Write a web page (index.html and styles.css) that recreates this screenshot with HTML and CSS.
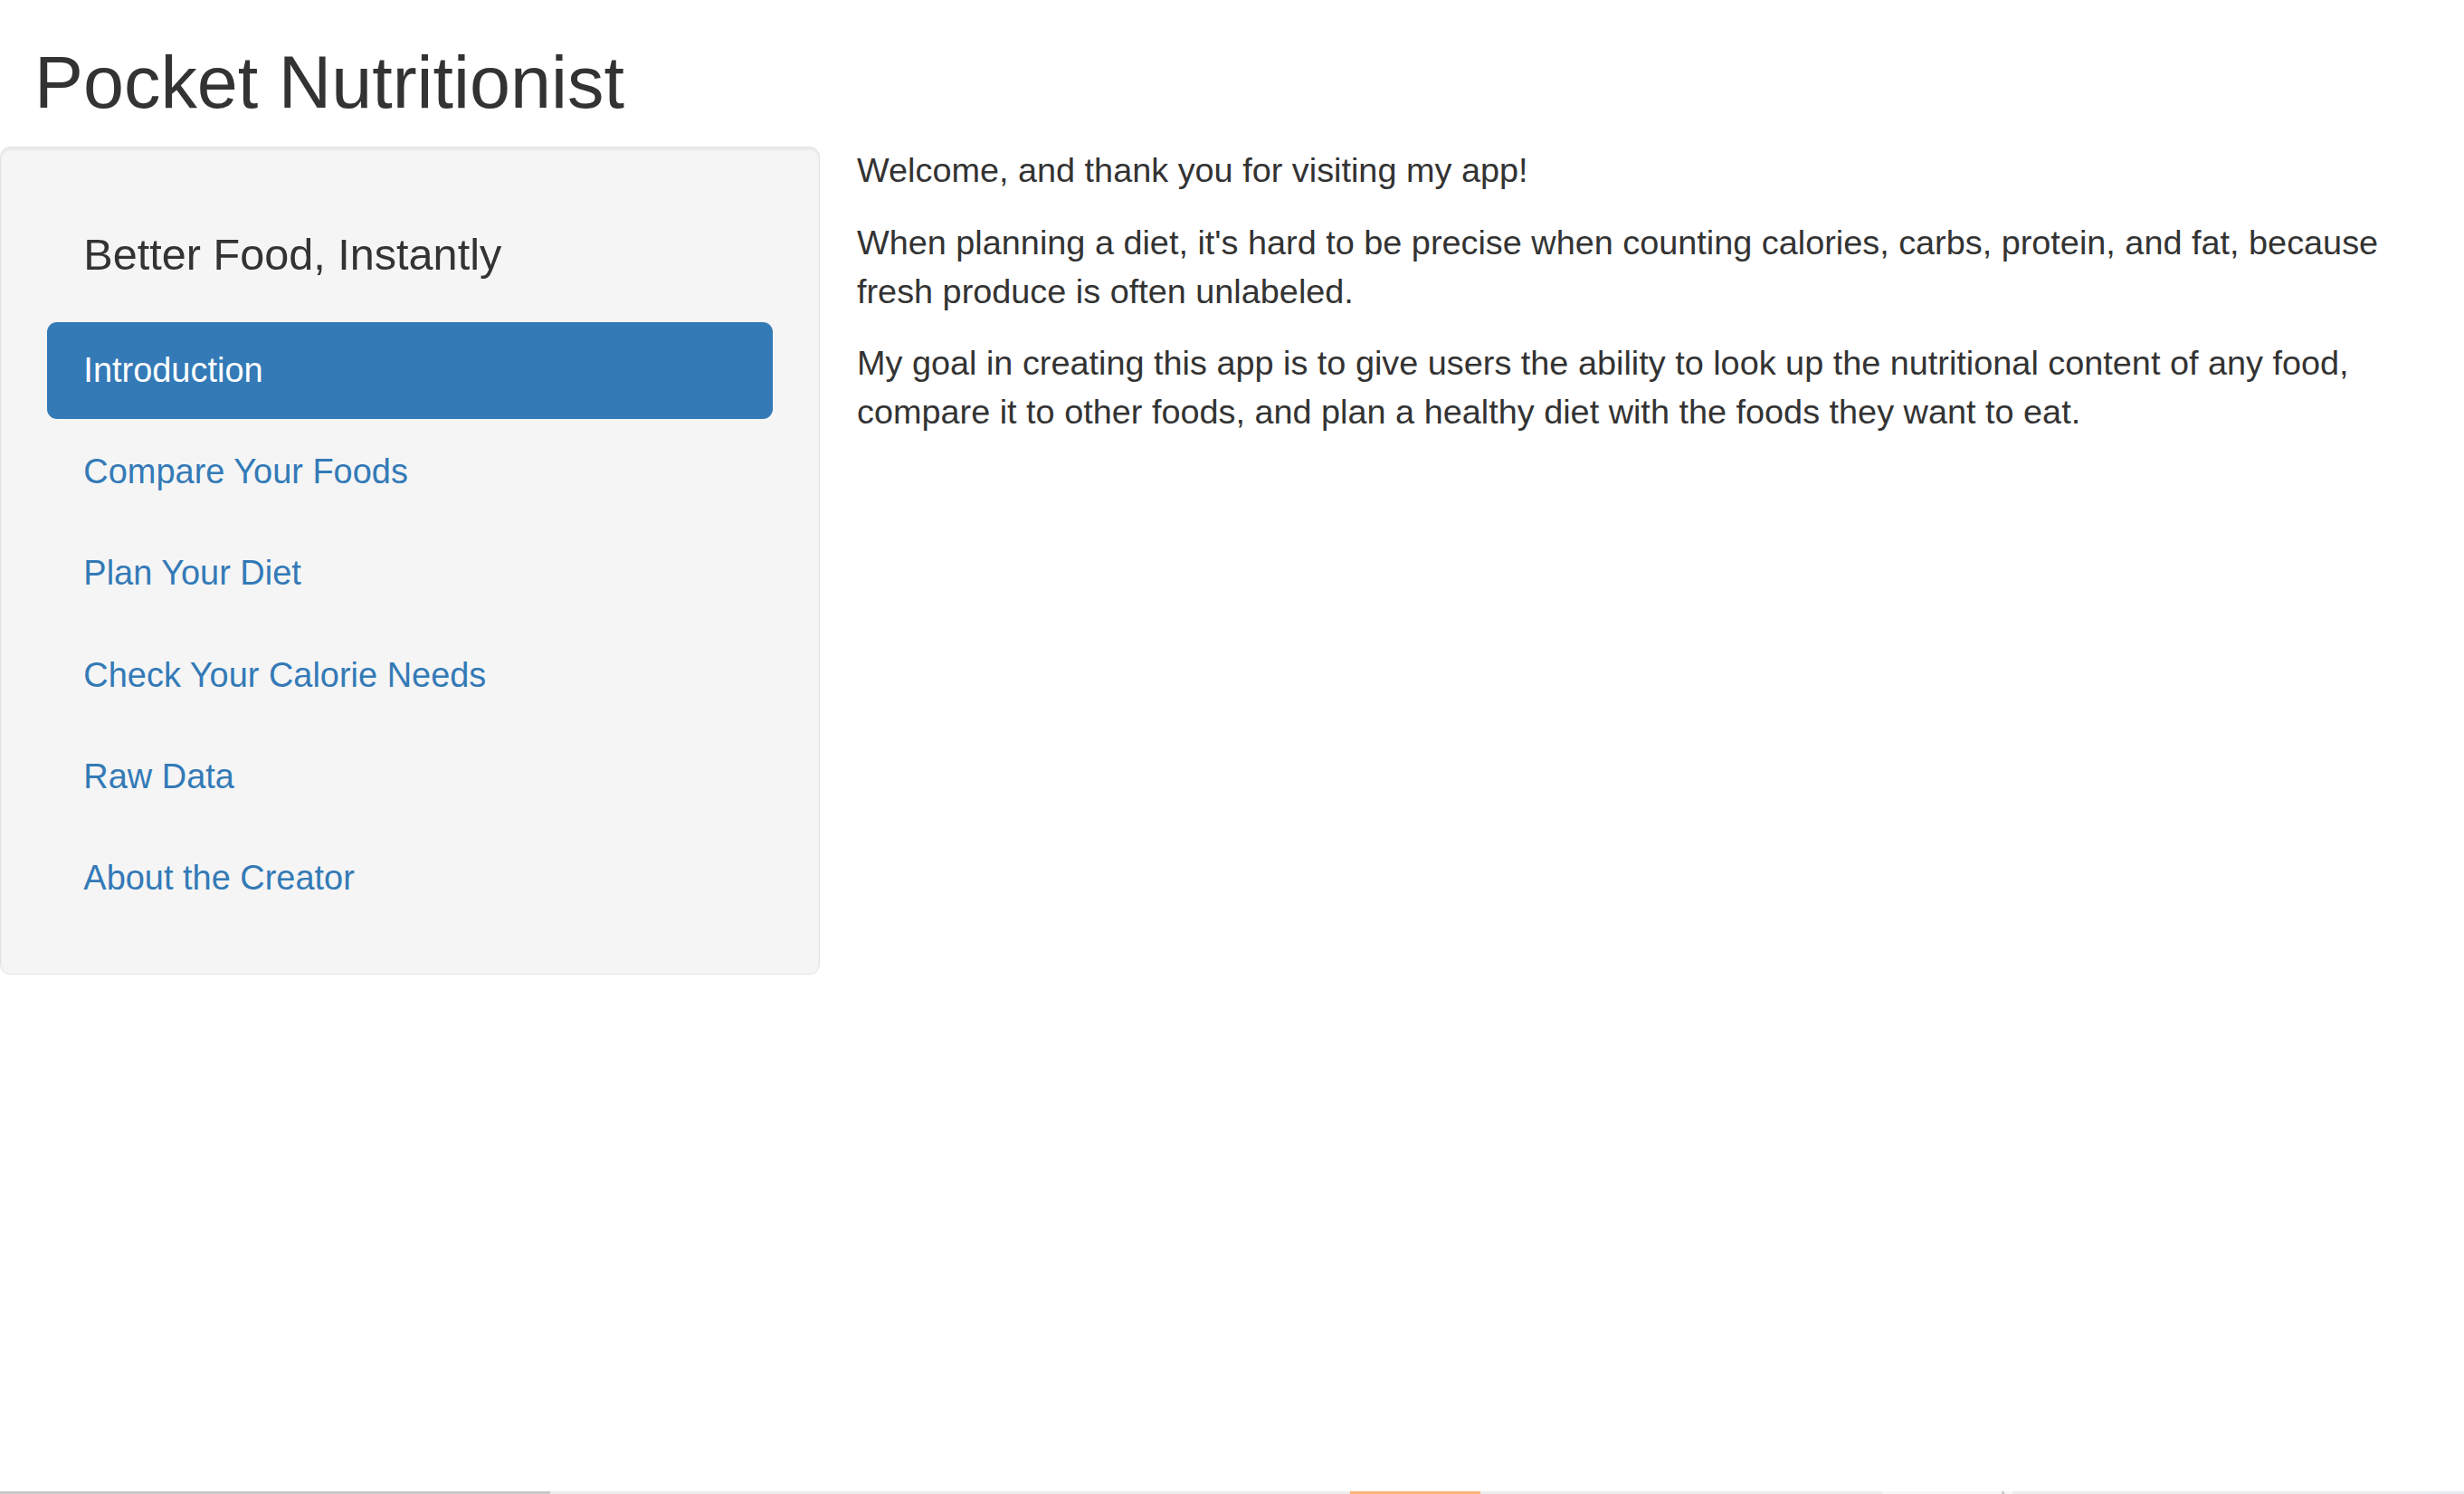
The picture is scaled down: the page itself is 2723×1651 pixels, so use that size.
FILE: index.html
```html
<!DOCTYPE html>
<html lang="en">
<head>
<meta charset="utf-8">
<title>Pocket Nutritionist</title>
<link rel="stylesheet" href="styles.css">
</head>
<body>
<div class="page">
  <h2 class="title">Pocket Nutritionist</h2>
  <div class="row">
    <div class="well">
      <ul class="nav">
        <li class="brand">Better Food, Instantly</li>
        <li class="item active"><a href="#">Introduction</a></li>
        <li class="item"><a href="#">Compare Your Foods</a></li>
        <li class="item"><a href="#">Plan Your Diet</a></li>
        <li class="item"><a href="#">Check Your Calorie Needs</a></li>
        <li class="item"><a href="#">Raw Data</a></li>
        <li class="item"><a href="#">About the Creator</a></li>
      </ul>
    </div>
    <div class="content">
      <p>Welcome, and thank you for visiting my app!</p>
      <p>When planning a diet, it's hard to be precise when counting calories, carbs, protein, and fat, because fresh produce is often unlabeled.</p>
      <p>My goal in creating this app is to give users the ability to look up the nutritional content of any food, compare it to other foods, and plan a healthy diet with the foods they want to eat.</p>
    </div>
  </div>
  <div class="strip">
    <span class="seg s1"></span>
    <span class="seg s2"></span>
    <span class="seg s3"></span>
    <span class="seg s4"></span>
    <span class="seg s5"></span>
    <span class="seg s6"></span>
    <span class="seg s7"></span>
    <span class="seg s8"></span>
  </div>
</div>
</body>
</html>
```

FILE: styles.css
```css
html, body {
  margin: 0;
  padding: 0;
  background: #ffffff;
}

body {
  font-family: "Liberation Sans", Arial, Helvetica, sans-serif;
  color: #333333;
  font-size: 37.85px;
  line-height: 53.8px;
}

.page {
  min-height: 100vh;
  display: flex;
  flex-direction: column;
}

.title {
  margin: 46.6px 0 26.6px 0;
  padding-left: 38px;
  font-size: 80.9px;
  font-weight: 500;
  line-height: 88.8px;
  color: #333333;
}

.row {
  display: flex;
  align-items: flex-start;
}

.well {
  box-sizing: border-box;
  width: 906px;
  flex: none;
  background: #f5f5f5;
  border: 1px solid #e3e3e3;
  border-radius: 11px;
  padding: 51px;
  box-shadow: inset 0 3px 3px rgba(0, 0, 0, 0.05);
}

.nav {
  list-style: none;
  margin: 0;
  padding: 0;
}

.brand {
  box-sizing: border-box;
  height: 136.6px;
  padding: 41px 40.35px 0 40.35px;
  font-size: 48.6px;
  line-height: 53.8px;
  color: #333333;
}

.item {
  margin-top: 5.4px;
}

.item a {
  display: block;
  padding: 26.7px 40.35px;
  line-height: 53.6px;
  font-size: 37.95px;
  color: #337ab7;
  text-decoration: none;
  border-radius: 11px;
}

.item.active a {
  background: #337ab7;
  color: #ffffff;
}

.content {
  flex: 1;
  padding: 0 40px 0 41px;
}

.content p {
  margin: 0 0 26px 0;
}

.strip {
  margin-top: auto;
  display: flex;
  height: 3px;
}

.seg {
  display: block;
  height: 3px;
}

.s1 { width: 608px; background: #c9c9c9; }
.s2 { width: 884px; background: #ececec; }
.s3 { width: 144px; background: #fbb47a; }
.s4 { width: 444px; background: #ececec; }
.s5 { width: 132px; background: #f7f7f7; }
.s6 { width: 3px; background: #cccccc; }
.s7 { width: 9px; background: #f7f7f7; }
.s8 { flex: 1; background: linear-gradient(to right, #ececec 80%, #e6ebf3); }
```
